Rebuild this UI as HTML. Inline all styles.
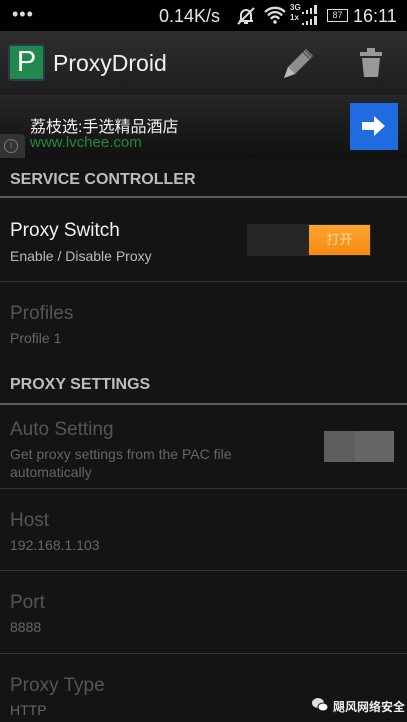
<!DOCTYPE html>
<html><head><meta charset="utf-8"><style>
*{margin:0;padding:0;box-sizing:border-box}
body{width:407px;height:722px;overflow:hidden;background:#141414;font-family:"Liberation Sans","Noto Sans CJK SC",sans-serif;position:relative;color:#eee}
.a{position:absolute;white-space:nowrap}
.t{font-size:19px;color:#f2f2f2}
.s{font-size:14px;color:#bbb}
.d{color:#555}
.ds{color:#666;font-size:14px}
.hd{font-size:16px;font-weight:bold;color:#bdbdbd}
.line{position:absolute;left:0;width:407px;height:1px;background:#333}
</style></head><body>
<div class="a" style="left:0;top:0;width:407px;height:31px;background:#000"></div>
<div class="a" style="left:12px;top:4px;font-size:18px;color:#ddd;letter-spacing:1px">•••</div>
<div class="a" style="left:159px;top:6px;font-size:18px;color:#e6e6e6">0.14K/s</div>
<svg class="a" style="left:236px;top:6px" width="20" height="20" viewBox="0 0 20 20"><path d="M5 15V9a5 5 0 0 1 10 0v6H3h14M8 17h4M2 18L18 2" stroke="#ddd" stroke-width="2" fill="none"/></svg>
<svg class="a" style="left:263px;top:6px" width="24" height="18" viewBox="0 0 24 18"><path d="M2 6a14 14 0 0 1 20 0M5 9.5a9 9 0 0 1 14 0M8 13a4.5 4.5 0 0 1 8 0" stroke="#ddd" stroke-width="2.3" fill="none"/><circle cx="12" cy="16" r="1.8" fill="#ddd"/></svg>
<div class="a" style="left:290px;top:3px;font-size:8px;font-weight:bold;color:#ddd;line-height:10px">3G<br>1x</div>
<svg class="a" style="left:300px;top:4px" width="20" height="22" viewBox="0 0 20 22"><path d="M2 8h2v2H2zM6 6h2v4H6zM10 4h2v6h-2zM14 1h3v9h-3zM2 19h2v2H2zM6 17h2v4H6zM10 15h2v6h-2zM14 12h3v9h-3z" fill="#ddd"/></svg>
<div class="a" style="left:327px;top:9px;width:21px;height:13px;border:1.5px solid #ddd;font-size:9px;color:#ddd;text-align:center;line-height:10px">87</div>
<div class="a" style="left:353px;top:6px;font-size:18px;color:#e6e6e6">16:11</div>
<div class="a" style="left:0;top:31px;width:407px;height:64px;background:linear-gradient(#2e2e2e,#1e1e1e)"></div>
<div class="a" style="left:8px;top:44px;width:37px;height:37px;background:#1f8a4c;border:2px solid #2a3a52;border-radius:3px;color:#fff;font-size:29px;text-align:center;line-height:33px">P</div>
<div class="a" style="left:53px;top:50px;font-size:23px;color:#f0f0f0">ProxyDroid</div>
<svg class="a" style="left:282px;top:46px" width="34" height="34" viewBox="0 0 34 34"><path d="M2 32l4-11 18-18 7 7-18 18z" fill="#8e8e8e"/><path d="M2 32l4-11 7 7z" fill="#bbb"/><path d="M21 6l7 7M23 4l7 7" stroke="#555" stroke-width="1.5"/></svg>
<svg class="a" style="left:358px;top:46px" width="26" height="32" viewBox="0 0 26 32"><rect x="2" y="6" width="22" height="4" fill="#999"/><rect x="9" y="2" width="8" height="4" fill="#999"/><path d="M4 12h18l-2 19H6z" fill="#999"/></svg>
<div class="a" style="left:0;top:95px;width:407px;height:63px;background:linear-gradient(#262626,#111)"></div>
<div class="a" style="left:30px;top:113px;font-size:16px;color:#f0f0f0">荔枝选:手选精品酒店</div>
<div class="a" style="left:30px;top:134px;font-size:15px;color:#1e8a3e">www.lvchee.com</div>
<div class="a" style="left:0;top:134px;width:25px;height:24px;background:#333;border-radius:0 4px 0 0"></div>
<div class="a" style="left:4px;top:139px;width:14px;height:14px;border:1.5px solid #777;border-radius:50%;font-size:10px;color:#777;text-align:center;line-height:11px">i</div>
<div class="a" style="left:350px;top:103px;width:48px;height:47px;background:#1e6ce0"></div>
<svg class="a" style="left:361px;top:114px" width="26" height="24" viewBox="0 0 26 24"><path d="M1 8h12V2l11 10-11 10v-6H1z" fill="#fff"/></svg>
<div class="a hd" style="left:10px;top:171px">SERVICE CONTROLLER</div>
<div class="a" style="left:0;top:196px;width:407px;height:2px;background:#5a5a5a"></div>
<div class="a t" style="left:10px;top:220px">Proxy Switch</div>
<div class="a s" style="left:10px;top:248px">Enable / Disable Proxy</div>
<div class="a" style="left:247px;top:224px;width:124px;height:32px;background:#262626"></div>
<div class="a" style="left:309px;top:225px;width:61px;height:30px;background:linear-gradient(#ffa431,#f78a10);color:#ffd9a6;font-size:13px;text-align:center;line-height:30px">打开</div>
<div class="line" style="top:281px"></div>
<div class="a t d" style="left:10px;top:303px">Profiles</div>
<div class="a ds" style="left:10px;top:330px">Profile 1</div>
<div class="a hd" style="left:10px;top:376px">PROXY SETTINGS</div>
<div class="a" style="left:0;top:403px;width:407px;height:2px;background:#5a5a5a"></div>
<div class="a t d" style="left:10px;top:419px">Auto Setting</div>
<div class="a ds" style="left:10px;top:445px;line-height:18px">Get proxy settings from the PAC file<br>automatically</div>
<div class="a" style="left:324px;top:431px;width:70px;height:31px;background:#5e5e5e"></div>
<div class="a" style="left:355px;top:431px;width:39px;height:31px;background:#666"></div>
<div class="line" style="top:488px"></div>
<div class="a t d" style="left:10px;top:510px">Host</div>
<div class="a ds" style="left:10px;top:537px">192.168.1.103</div>
<div class="line" style="top:570px"></div>
<div class="a t d" style="left:10px;top:592px">Port</div>
<div class="a ds" style="left:10px;top:619px">8888</div>
<div class="line" style="top:653px"></div>
<div class="a t d" style="left:10px;top:675px">Proxy Type</div>
<div class="a ds" style="left:10px;top:702px">HTTP</div>
<svg class="a" style="left:311px;top:697px" width="18" height="16" viewBox="0 0 18 16"><ellipse cx="7" cy="6" rx="6" ry="5" fill="#ddd"/><ellipse cx="12" cy="10" rx="5" ry="4" fill="#fff" stroke="#141414"/></svg>
<div class="a" style="left:333px;top:698px;font-size:12px;font-weight:bold;color:#eee">飓风网络安全</div>
</body></html>
